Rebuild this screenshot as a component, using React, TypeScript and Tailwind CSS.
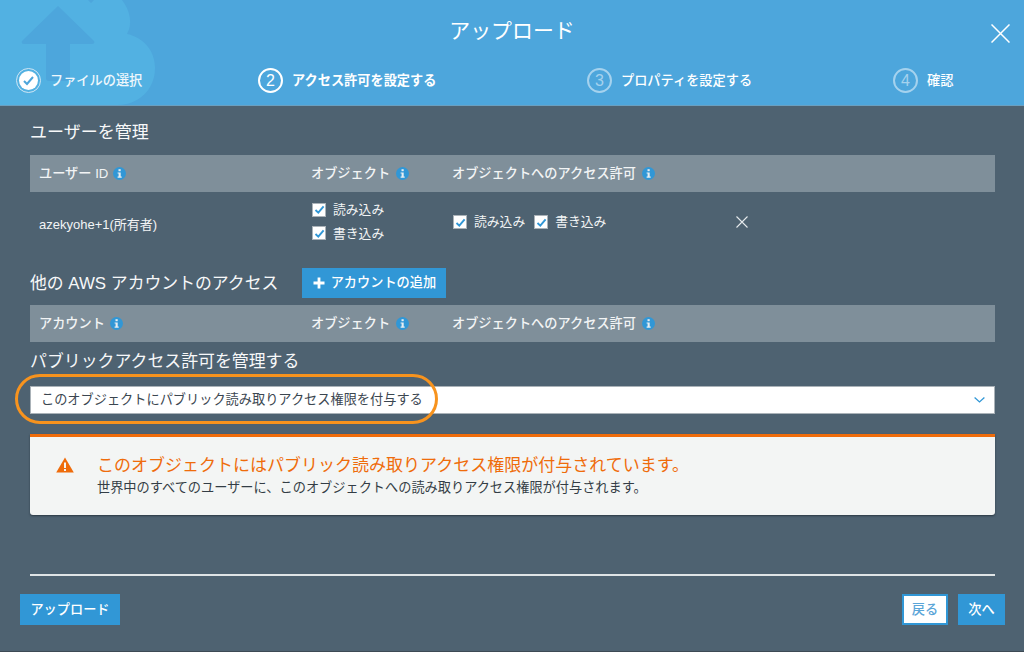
import React from 'react';

const font = '[font-family:"Liberation_Sans","Noto_Sans_CJK_JP",sans-serif]';

const InfoIcon: React.FC = () => (
  <svg className="w-[13px] h-[13px] shrink-0" viewBox="0 0 13 13">
    <circle cx="6.5" cy="6.5" r="6.5" fill="#3197d6" />
    <rect x="5.5" y="2.2" width="2.2" height="2" fill="#e8eef2" />
    <path d="M4.6 5.4h3.1v4.2h1v1.2H4.6V9.6h1V6.6h-1z" fill="#e8eef2" />
  </svg>
);

const Checkbox: React.FC<{ label: string }> = ({ label }) => (
  <div className="flex items-center gap-[7px]">
    <span className="w-[14px] h-[14px] bg-white border border-[#aab2b8] flex items-center justify-center shrink-0">
      <svg className="w-[11px] h-[11px]" viewBox="0 0 11 11" fill="none">
        <path d="M1.5 6l2.8 2.6L9.6 2.4" stroke="#3197d6" strokeWidth="1.9" />
      </svg>
    </span>
    <span className="text-[12.8px] text-[#f2f4f5]">{label}</span>
  </div>
);

const Step: React.FC<{ num: number; label: string; active?: boolean }> = ({ num, label, active }) => (
  <div className="flex items-center gap-[9px]">
    <span
      className={`w-[25px] h-[25px] rounded-full border-2 flex items-center justify-center text-[16px] ${
        active ? 'border-white text-white' : 'border-[#a5d2ee] text-[#a5d2ee]'
      }`}
    >
      {num}
    </span>
    <span className={`text-[13.2px] text-white ${active ? 'font-bold' : 'font-medium'}`}>{label}</span>
  </div>
);

const HeaderRow: React.FC<{ first: string }> = ({ first }) => (
  <div className="h-[37px] bg-[#7f8f9a] grid grid-cols-[272px_141px_1fr] pl-[9px] items-center text-[13.2px] font-medium text-[#f2f4f5]">
    <div className="flex items-center gap-[5px]">
      {first}
      <InfoIcon />
    </div>
    <div className="flex items-center gap-[6px]">
      オブジェクト
      <InfoIcon />
    </div>
    <div className="flex items-center gap-[6px]">
      オブジェクトへのアクセス許可
      <InfoIcon />
    </div>
  </div>
);

export default function App() {
  return (
    <div className={`${font} w-[1024px] h-[652px] bg-[#4e6271] flex flex-col overflow-hidden border-b border-[#3d4a54]`}>
      <header className="relative h-[106px] shrink-0 bg-[#4da6dc] border-b border-[#6a9fc0] overflow-hidden">
        <svg className="absolute left-0 top-0 w-[160px] h-[106px]" viewBox="0 0 160 106">
          <path
            d="M0 0H88L91 3L94 0H122C130 10 133 24 127 34C145 38 155 52 155 68C155 90 138 105 118 105H0Z"
            fill="#52b1e2"
          />
          <path d="M58 6L94 41Q95 44 92 44H70V78Q70 81 67 81H49Q46 81 46 78V44H24Q21 44 22 41Z" fill="#4da6dc" />
        </svg>
        <div className="relative h-[62px] flex items-center justify-center text-[20.9px] text-white">アップロード</div>
        <button className="absolute left-[991px] top-[24px]" aria-label="閉じる">
          <svg className="w-[19px] h-[19px] block" viewBox="0 0 19 19" stroke="white" strokeWidth="1.5">
            <path d="M0.5 0.5l18 18M18.5 0.5l-18 18" />
          </svg>
        </button>
        <div className="relative grid grid-cols-[242px_329px_306px_1fr] pl-4 mt-[6px]">
          <div className="flex items-center gap-[9px]">
            <span className="w-[25px] h-[25px] rounded-full border border-[#cfe6f5] flex items-center justify-center">
              <span className="w-[19px] h-[19px] rounded-full bg-white flex items-center justify-center">
                <svg className="w-[13px] h-[13px]" viewBox="0 0 13 13" fill="none">
                  <path d="M2 7l3 3 6-7" stroke="#4da6dc" strokeWidth="2" />
                </svg>
              </span>
            </span>
            <span className="text-[13.2px] font-medium text-[#eef7fc]">ファイルの選択</span>
          </div>
          <Step num={2} label="アクセス許可を設定する" active />
          <Step num={3} label="プロパティを設定する" />
          <Step num={4} label="確認" />
        </div>
      </header>

      <main className="flex-1 flex flex-col pl-[30px] pr-[29px] text-white">
        <h2 className="text-[17px] leading-[24px] mt-[15px] mb-[10px] font-normal text-[#f7f8f9]">ユーザーを管理</h2>
        <HeaderRow first="ユーザー ID" />

        <div className="h-[66px] grid grid-cols-[272px_141px_288px_auto] pl-[9px] items-center text-[13px] text-[#f2f4f5]">
          <div>azekyohe+1(所有者)</div>
          <div className="flex flex-col gap-[4px] pl-[1px] -mt-[7px]">
            <Checkbox label="読み込み" />
            <Checkbox label="書き込み" />
          </div>
          <div className="flex items-center gap-[9px] pl-[1px] -mt-[6px]">
            <Checkbox label="読み込み" />
            <Checkbox label="書き込み" />
          </div>
          <svg className="w-[12px] h-[12px] -ml-[4px] -mt-[6px]" viewBox="0 0 12 12" stroke="#e6eaed" strokeWidth="1.1">
            <path d="M0.5 0.5l11 11M11.5 0.5l-11 11" />
          </svg>
        </div>

        <div className="flex items-center gap-[24px] mt-[10px] mb-[7px]">
          <h2 className="text-[16.85px] pt-[1px] font-normal text-[#f7f8f9]">他の AWS アカウントのアクセス</h2>
          <button className="w-[144px] h-[30px] bg-[#3197d6] flex items-center justify-center gap-[6px] text-[13.2px] font-medium text-white">
            <svg className="w-[12px] h-[12px]" viewBox="0 0 12 12" fill="white">
              <path d="M4.6 0.5h2.8v4.1h4.1v2.8H7.4v4.1H4.6V7.4H0.5V4.6h4.1z" />
            </svg>
            アカウントの追加
          </button>
        </div>
        <HeaderRow first="アカウント" />

        <h2 className="text-[16.9px] leading-[24px] mt-[8px] mb-[12px] font-normal text-[#f7f8f9]">
          パブリックアクセス許可を管理する
        </h2>
        <div className="relative h-[28px] bg-white border border-[#aab2b8] flex items-center justify-between pl-[10px] pr-[9px] text-[13.2px] text-[#3b4650] shrink-0">
          <span>このオブジェクトにパブリック読み取りアクセス権限を付与する</span>
          <svg className="w-[11px] h-[6px]" viewBox="0 0 11 6" fill="none" stroke="#3197d6" strokeWidth="1.3">
            <path d="M0.6 0.6L5.5 5l4.9-4.4" />
          </svg>
          <div className="absolute -left-[16px] -top-[13px] w-[423px] h-[50px] rounded-[25px] border-[3px] border-[#f7931e]" />
        </div>

        <div className="h-[81px] mt-[20px] bg-[#f3f5f4] border-t-[3px] border-[#ef6c0b] rounded-b-[3px] shadow-[0_1px_2px_rgba(30,40,50,0.7)] flex pl-[26px] pt-[18px] shrink-0">
          <svg className="w-[18px] h-[16px] mt-[2px] shrink-0" viewBox="0 0 18 16">
            <path d="M9 0.5L17.8 15.5H0.2Z" fill="#ef6c0b" />
            <rect x="8" y="5.5" width="2" height="5.5" fill="#f3f5f4" />
            <rect x="8" y="12" width="2" height="2" fill="#f3f5f4" />
          </svg>
          <div className="ml-[23px]">
            <div className="text-[17px] leading-[21px] text-[#ef6c0b]">
              このオブジェクトにはパブリック読み取りアクセス権限が付与されています。
            </div>
            <div className="text-[13.2px] leading-[20px] mt-[2px] text-[#333d45]">
              世界中のすべてのユーザーに、このオブジェクトへの読み取りアクセス権限が付与されます。
            </div>
          </div>
        </div>

        <div className="h-[2px] bg-[#dfe4e6] mt-[59px] shrink-0" />
      </main>

      <footer className="shrink-0 flex items-start justify-between pl-[20px] pr-[19px] pb-[26px] -mt-[1px]">
        <button className="w-[100px] h-[31px] bg-[#3197d6] text-[13.2px] font-medium text-white">アップロード</button>
        <div className="flex gap-[10px]">
          <button className="w-[46px] h-[31px] bg-white border-2 border-[#3197d6] text-[13.2px] font-medium text-[#5aa5d8]">
            戻る
          </button>
          <button className="w-[47px] h-[31px] bg-[#3197d6] text-[13.2px] font-medium text-white">次へ</button>
        </div>
      </footer>
    </div>
  );
}
